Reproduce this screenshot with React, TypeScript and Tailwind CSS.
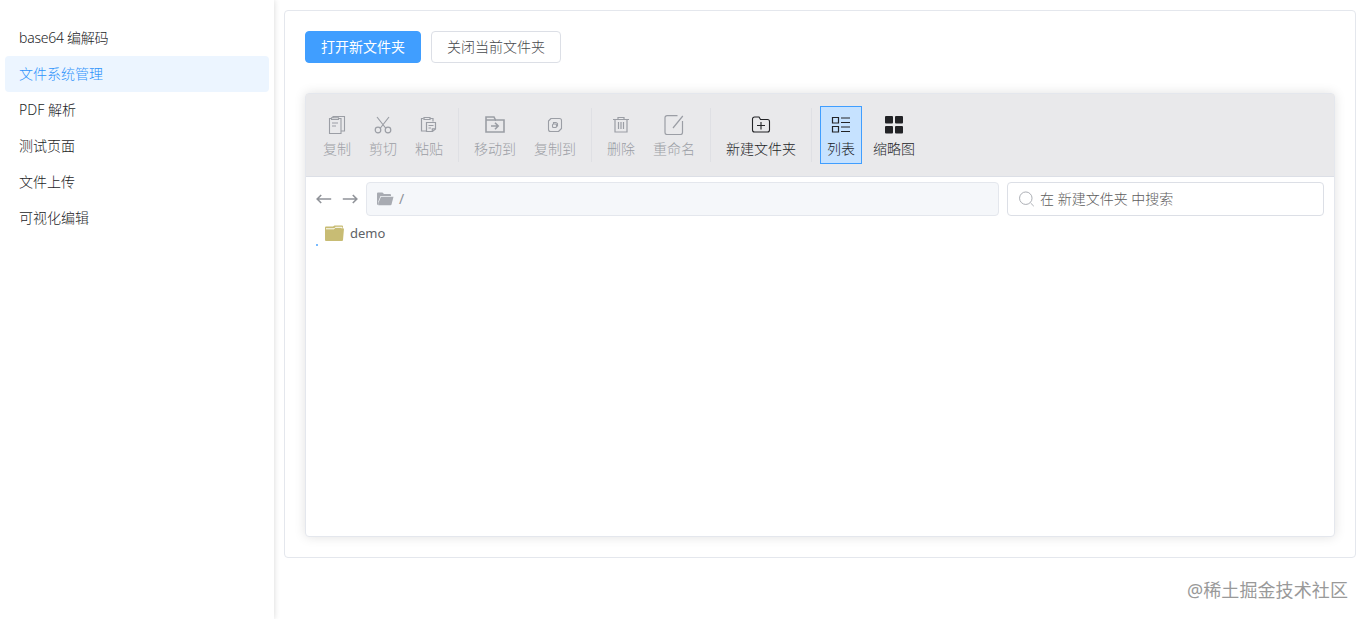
import type { ReactNode } from "react";
import clsx from "clsx";

const menus = ["base64 编解码", "文件系统管理", "PDF 解析", "测试页面", "文件上传", "可视化编辑"];

function Icon({ children, size = 20, width = 1.2 }: { children: ReactNode; size?: number; width?: number }) {
  return (
    <svg
      width={size}
      height={size}
      viewBox="0 0 20 20"
      fill="none"
      stroke="currentColor"
      strokeWidth={width}
      className="shrink-0"
    >
      {children}
    </svg>
  );
}

const CopyIcon = () => (
  <Icon width={1.1}>
    <path d="M6 3V1.500h11.500v14.500H14" />
    <path d="M4.500 3.500H2.500v15h11.500v-15h-2" />
    <path d="M4.500 2.800h7v1.700h-7zM5 8h6M5 11h4" />
  </Icon>
);

const CutIcon = () => (
  <Icon width={1.2}>
    <path d="M4 2l9 11.500M16 2L7 13.500" />
    <circle cx="5" cy="15" r="2.800" />
    <circle cx="15" cy="15" r="2.800" />
  </Icon>
);

const PasteIcon = () => (
  <Icon width={1.2}>
    <path d="M7 16H2.500V3.500h2M14 6.500v-3h-3" />
    <path d="M5 2.500h6v2H5z" />
    <path d="M7.500 7.500h9v6.500l-3 2.500H7.500z" />
    <path d="M9.500 10.500h5M9.500 13h2.500M13.300 16.500V13.800h3" />
  </Icon>
);

const MoveIcon = () => (
  <Icon width={1.6}>
    <path d="M1 17V2h8l1.500 3H19v12z" />
    <path d="M1 5h10M6 11h7M10 7.800l3.200 3.200-3.200 3.200" />
  </Icon>
);

const CopyToIcon = () => (
  <Icon width={1.1}>
    <path d="M6 3.500h8.500q2 0 2 2V13.500l-3 3H5.500q-2 0-2-2V6z" strokeLinejoin="round" />
    <rect x="7.500" y="9" width="4" height="3.500" rx="1" />
    <path d="M8.500 9V7.500h2.500l1.500 1v2.500h-1" />
  </Icon>
);

const DeleteIcon = () => (
  <Icon width={1.2}>
    <path d="M2 4.500h16M7 4.500v-2h6v2M4 4.500v12.500h12V4.500M7.500 7v7M10 7v7M12.500 7v7" />
  </Icon>
);

const RenameIcon = () => (
  <Icon width={1.2}>
    <path d="M13.500 0.700H3a2 2 0 0 0-2 2V17.500a2 2 0 0 0 2 2H16.500a2 2 0 0 0 2-2V6M9 13L18.800 1" />
  </Icon>
);

const NewFolderIcon = () => (
  <Icon width={1.1}>
    <path d="M1.500 4a2 2 0 0 1 2-2H8l1.500 2.500h7a2 2 0 0 1 2 2v8.500a2 2 0 0 1-2 2h-13a2 2 0 0 1-2-2z" />
    <path d="M10 7v7.500M6 10.500h8" />
  </Icon>
);

const ListIcon = () => (
  <Icon width={1.2}>
    <path d="M1.500 2.500h6v5.500h-6zM1.500 11.500h6V17h-6zM10 3h9M10 7.500h9M10 12h9M10 16.500h9" />
  </Icon>
);

const GridIcon = () => (
  <Icon width={0}>
    <g fill="currentColor">
      <rect x="1" y="1" width="8" height="7.500" rx="1" />
      <rect x="11" y="1" width="8" height="7.500" rx="1" />
      <rect x="1" y="11" width="8" height="7.500" rx="1" />
      <rect x="11" y="11" width="8" height="7.500" rx="1" />
    </g>
  </Icon>
);

type Tool = { label: string; icon: ReactNode; state?: "disabled" | "active" };

const groups: Tool[][] = [
  [
    { label: "复制", icon: <CopyIcon />, state: "disabled" },
    { label: "剪切", icon: <CutIcon />, state: "disabled" },
    { label: "粘贴", icon: <PasteIcon />, state: "disabled" },
  ],
  [
    { label: "移动到", icon: <MoveIcon />, state: "disabled" },
    { label: "复制到", icon: <CopyToIcon />, state: "disabled" },
  ],
  [
    { label: "删除", icon: <DeleteIcon />, state: "disabled" },
    { label: "重命名", icon: <RenameIcon />, state: "disabled" },
  ],
  [{ label: "新建文件夹", icon: <NewFolderIcon /> }],
  [
    { label: "列表", icon: <ListIcon />, state: "active" },
    { label: "缩略图", icon: <GridIcon /> },
  ],
];

function Sidebar() {
  return (
    <aside className="w-[274px] shrink-0 px-[5px] pt-5 shadow-[0_0_6px_rgba(0,0,0,0.16)]">
      {menus.map((name, i) => (
        <div
          key={name}
          className={clsx(
            "flex h-9 w-[264px] items-center rounded pl-3.5",
            i === 0 && "tracking-[-0.25px]",
            i === 1 ? "bg-[#ecf5ff] text-[#2f93fb]" : "text-[#1c1d1f]",
          )}
        >
          {name}
        </div>
      ))}
    </aside>
  );
}

function ToolButton({ label, icon, state }: Tool) {
  return (
    <button
      className={clsx(
        "flex h-[58px] flex-col items-center border px-1.5 pt-2",
        state === "active" ? "border-[#409eff] bg-[#c6e2ff]" : "border-transparent",
        state === "disabled" ? "text-[#9b9ea5]" : "text-[#222326]",
      )}
    >
      {icon}
      <span className="mt-1 whitespace-nowrap leading-5">{label}</span>
    </button>
  );
}

function Toolbar() {
  return (
    <div className="flex h-[83px] items-center border-b border-[#dcdfe6] bg-[#e9e9eb] px-2.5">
      {groups.map((group, i) => (
        <div key={i} className="flex items-center">
          {i > 0 && <div className="mx-2 h-[54px] w-px bg-[#dfe0e4]" />}
          <div className="flex gap-1">
            {group.map((tool) => (
              <ToolButton key={tool.label} {...tool} />
            ))}
          </div>
        </div>
      ))}
    </div>
  );
}

function PathBar() {
  return (
    <div className="flex items-center gap-2 px-2.5 pt-[5px]">
      <div className="flex w-[42px] shrink-0 justify-between text-[#909399]">
        <Icon size={16} width={2}>
          <path d="M19 10H1.500M6.500 5L1.500 10l5 5" />
        </Icon>
        <Icon size={16} width={2}>
          <path d="M1 10h17.500M13.500 5l5 5-5 5" />
        </Icon>
      </div>
      <div className="flex h-[34px] flex-1 items-center rounded border border-[#e4e7ed] bg-[#f5f7fa] pl-2.5 text-[#909399]">
        <svg width="17" height="14" viewBox="0 0 17 14" fill="#a8abb2">
          <path d="M0 1.500Q0 .5 1 .5h4.500L7 2h6q1 0 1 1v1H3.500L1.300 9.500V13Q0 13 0 12z" />
          <path d="M4 4.700h12.500L14.500 12.500q-.2.700-1 .7H1.300V11z" />
        </svg>
        <span className="ml-[5px] font-normal">/</span>
      </div>
      <div className="flex h-[34px] w-[317px] items-center rounded border border-[#dcdfe6] bg-white pl-[11px] text-[#5c5c5c]">
        <Icon size={16} width={1.2}>
          <circle cx="8.500" cy="9" r="7.800" stroke="#a8abb2" />
          <path d="M14.500 15l4 4" stroke="#a8abb2" />
        </Icon>
        <span className="ml-[5px]">在 新建文件夹 中搜索</span>
      </div>
    </div>
  );
}

function FileManager() {
  return (
    <div className="mt-[30px] h-[444px] rounded border border-[#e4e7ed] bg-white shadow-[0_0_12px_rgba(0,0,0,0.12)]">
      <Toolbar />
      <PathBar />
      <div className="relative flex h-[34px] items-center pl-[19px] text-[#606266]">
        <span className="absolute left-[10px] top-[28px] h-0.5 w-0.5 bg-[#79bbff]" />
        <svg width="19" height="16" viewBox="0 0 19 16">
          <path d="M0 2.500q0-1 1-1h7L9.500.5H17q1 0 1 1V14H0z" fill="#c8bc74" />
          <path d="M1 3.800h8l1.500-1.500H17v1.500" stroke="#fff" strokeWidth="1" fill="none" />
          <path d="M0 5h9.500l2-1.500H19L18 15q0 1-1 1H1q-1 0-1-1z" fill="#c8bc74" />
        </svg>
        <span className="ml-1.5 pt-px text-[13px] font-normal">demo</span>
      </div>
    </div>
  );
}

export default function App() {
  return (
    <div className="relative flex h-[619px] overflow-hidden bg-white font-['Noto_Sans','Noto_Sans_CJK_SC',sans-serif] text-sm font-light">
      <Sidebar />
      <main className="min-w-0 flex-1 p-2.5">
        <div className="h-[548px] rounded border border-[#e4e7ed] p-5">
          <div className="flex gap-2.5">
            <button className="h-8 rounded border border-[#409eff] bg-[#409eff] px-[15px] font-normal text-white">
              打开新文件夹
            </button>
            <button className="h-8 rounded border border-[#dcdfe6] bg-white px-[15px] text-[#47494d]">
              关闭当前文件夹
            </button>
          </div>
          <FileManager />
        </div>
      </main>
      <div className="absolute bottom-[17px] right-[18px] text-lg font-normal leading-6 tracking-[0.1px] text-[#999]">
        @稀土掘金技术社区
      </div>
    </div>
  );
}
